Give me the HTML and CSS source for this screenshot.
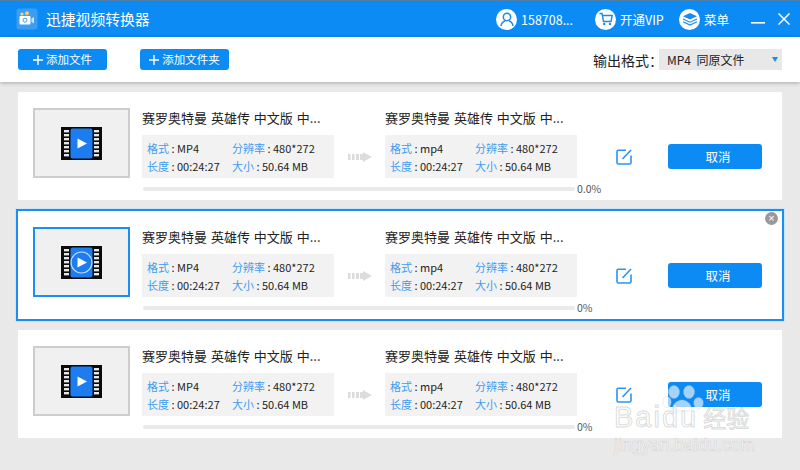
FILE: index.html
```html
<!DOCTYPE html>
<html lang="zh-CN">
<head>
<meta charset="utf-8">
<title>迅捷视频转换器</title>
<link rel="stylesheet" href="styles.css">
</head>
<body>
<svg class="defs" width="0" height="0">
  <defs>
    <symbol id="film" viewBox="0 0 41 33">
      <rect width="41" height="33" fill="#0b0b0b"/>
      <g fill="#e8e8e8">
        <rect x="3" y="3" width="5" height="2.4"/><rect x="3" y="7" width="5" height="2.4"/><rect x="3" y="11" width="5" height="2.4"/><rect x="3" y="15" width="5" height="2.4"/><rect x="3" y="19" width="5" height="2.4"/><rect x="3" y="23" width="5" height="2.4"/><rect x="3" y="27" width="5" height="2.4"/>
        <rect x="33" y="3" width="5" height="2.4"/><rect x="33" y="7" width="5" height="2.4"/><rect x="33" y="11" width="5" height="2.4"/><rect x="33" y="15" width="5" height="2.4"/><rect x="33" y="19" width="5" height="2.4"/><rect x="33" y="23" width="5" height="2.4"/><rect x="33" y="27" width="5" height="2.4"/>
      </g>
      <rect x="9.5" y="1.5" width="22" height="30" rx="2" fill="#1d7df0"/>
      <path d="M16.5 11.5 L26 16.5 L16.5 21.5 Z" fill="#fff"/>
    </symbol>
    <symbol id="film-ring" viewBox="0 0 41 33">
      <use href="#film"/>
      <circle cx="20.5" cy="16.5" r="10.5" fill="none" stroke="#bcdcff" stroke-width="1.2"/>
    </symbol>
    <symbol id="arrow" viewBox="0 0 24 10">
      <g fill="#dcdcdc">
        <rect x="0" y="2" width="2.5" height="6"/><rect x="4" y="2" width="2.5" height="6"/><rect x="8" y="2" width="3" height="6"/><rect x="12" y="2" width="3" height="6"/>
        <path d="M15 0 L24 5 L15 10 Z"/>
      </g>
    </symbol>
    <symbol id="edit" viewBox="0 0 16 16">
      <path d="M10 1.2 H2.5 A1.5 1.5 0 0 0 1 2.7 V13.5 A1.5 1.5 0 0 0 2.5 15 H13.5 A1.5 1.5 0 0 0 15 13.5 V6.5" fill="none" stroke="#2a93f3" stroke-width="1.6"/>
      <path d="M6.5 10 L15 1" fill="none" stroke="#2a93f3" stroke-width="1.6"/>
    </symbol>
    <symbol id="plus" viewBox="0 0 10 10">
      <path d="M5 0 V10 M0 5 H10" stroke="#fff" stroke-width="1.4" fill="none"/>
    </symbol>
  </defs>
</svg>

<header class="titlebar">
  <div class="logo">
    <svg width="22" height="22" viewBox="0 0 22 22">
      <rect x="0.5" y="0.5" width="21" height="21" rx="3" fill="#3c9df3"/>
      <rect x="3.5" y="8" width="11" height="8.5" rx="1" fill="#fff"/>
      <path d="M15.5 10.5 L18 9 V15.5 L15.5 14 Z" fill="#cfe6fb"/>
      <circle cx="6" cy="6" r="1.6" fill="#f7d488"/>
      <circle cx="11" cy="5.2" r="2" fill="#f5c76e"/>
      <circle cx="9" cy="12.2" r="2" fill="none" stroke="#3c9df3" stroke-width="1"/>
    </svg>
  </div>
  <div class="app-name">迅捷视频转换器</div>
  <nav class="top-nav">
    <div class="top-item user">
      <span class="round">
        <svg width="14" height="15" viewBox="0 0 14 15"><circle cx="7" cy="5" r="3.7" fill="none" stroke="#1a8cf0" stroke-width="1.5"/><path d="M1 14 C1.5 10.5 4 9.3 5 9 M13 14 C12.5 10.5 10 9.3 9 9" fill="none" stroke="#1a8cf0" stroke-width="1.5"/></svg>
      </span>
      <span>158708...</span>
    </div>
    <div class="top-item vip">
      <span class="round">
        <svg width="14" height="14" viewBox="0 0 14 14"><path d="M0.5 1.5 H3 L4.5 9.5 H12 L13.2 3.5 H3.5" fill="none" stroke="#1a8cf0" stroke-width="1.4"/><circle cx="5.2" cy="12" r="1.2" fill="#1a8cf0"/><circle cx="11" cy="12" r="1.2" fill="#1a8cf0"/></svg>
      </span>
      <span>开通VIP</span>
    </div>
    <div class="top-item menu">
      <span class="round">
        <svg width="16" height="14" viewBox="0 0 16 14"><path d="M8 1 L15 4.2 L8 7.4 L1 4.2 Z" fill="#1a8cf0"/><path d="M1 7 L8 10.2 L15 7 M1 9.8 L8 13 L15 9.8" fill="none" stroke="#1a8cf0" stroke-width="1.2"/></svg>
      </span>
      <span>菜单</span>
    </div>
    <div class="win-controls">
      <svg width="14" height="14" viewBox="0 0 14 14"><rect y="10" width="14" height="1.6" fill="#fff"/></svg>
      <svg width="12" height="12" viewBox="0 0 12 12"><path d="M0.5 0.5 L11.5 11.5 M11.5 0.5 L0.5 11.5" stroke="#fff" stroke-width="1.5"/></svg>
    </div>
  </nav>
</header>

<section class="toolbar">
  <button class="add-btn"><svg class="plus" width="10" height="10"><use href="#plus"/></svg>添加文件</button>
  <button class="add-btn second"><svg class="plus" width="10" height="10"><use href="#plus"/></svg>添加文件夹</button>
  <div class="format">
    <span class="format-label">输出格式：</span>
    <div class="format-select"><span>MP4&nbsp;&nbsp;同原文件</span><i class="caret"></i></div>
  </div>
</section>

<main class="list">
  <article class="card">
    <div class="thumb"><svg width="41" height="33"><use href="#film"/></svg></div>
    <div class="main">
      <div class="files">
        <div class="file">
          <div class="file-title">赛罗奥特曼 英雄传 中文版 中...</div>
          <div class="info">
            <div><b>格式</b> : MP4</div><div><b>分辨率</b> : 480*272</div>
            <div><b>长度</b> : 00:24:27</div><div><b>大小</b> : 50.64 MB</div>
          </div>
        </div>
        <div class="arrow"><svg width="24" height="10"><use href="#arrow"/></svg></div>
        <div class="file">
          <div class="file-title">赛罗奥特曼 英雄传 中文版 中...</div>
          <div class="info">
            <div><b>格式</b> : mp4</div><div><b>分辨率</b> : 480*272</div>
            <div><b>长度</b> : 00:24:27</div><div><b>大小</b> : 50.64 MB</div>
          </div>
        </div>
        <div class="edit"><svg width="16" height="16"><use href="#edit"/></svg></div>
        <div class="action"><button class="cancel">取消</button></div>
      </div>
      <div class="progress"><div class="bar"></div><span>0.0%</span></div>
    </div>
  </article>

  <article class="card selected">
    <span class="close">×</span>
    <div class="thumb"><svg width="41" height="33"><use href="#film-ring"/></svg></div>
    <div class="main">
      <div class="files">
        <div class="file">
          <div class="file-title">赛罗奥特曼 英雄传 中文版 中...</div>
          <div class="info">
            <div><b>格式</b> : MP4</div><div><b>分辨率</b> : 480*272</div>
            <div><b>长度</b> : 00:24:27</div><div><b>大小</b> : 50.64 MB</div>
          </div>
        </div>
        <div class="arrow"><svg width="24" height="10"><use href="#arrow"/></svg></div>
        <div class="file">
          <div class="file-title">赛罗奥特曼 英雄传 中文版 中...</div>
          <div class="info">
            <div><b>格式</b> : mp4</div><div><b>分辨率</b> : 480*272</div>
            <div><b>长度</b> : 00:24:27</div><div><b>大小</b> : 50.64 MB</div>
          </div>
        </div>
        <div class="edit"><svg width="16" height="16"><use href="#edit"/></svg></div>
        <div class="action"><button class="cancel">取消</button></div>
      </div>
      <div class="progress"><div class="bar"></div><span>0%</span></div>
    </div>
  </article>

  <article class="card">
    <div class="thumb"><svg width="41" height="33"><use href="#film"/></svg></div>
    <div class="main">
      <div class="files">
        <div class="file">
          <div class="file-title">赛罗奥特曼 英雄传 中文版 中...</div>
          <div class="info">
            <div><b>格式</b> : MP4</div><div><b>分辨率</b> : 480*272</div>
            <div><b>长度</b> : 00:24:27</div><div><b>大小</b> : 50.64 MB</div>
          </div>
        </div>
        <div class="arrow"><svg width="24" height="10"><use href="#arrow"/></svg></div>
        <div class="file">
          <div class="file-title">赛罗奥特曼 英雄传 中文版 中...</div>
          <div class="info">
            <div><b>格式</b> : mp4</div><div><b>分辨率</b> : 480*272</div>
            <div><b>长度</b> : 00:24:27</div><div><b>大小</b> : 50.64 MB</div>
          </div>
        </div>
        <div class="edit"><svg width="16" height="16"><use href="#edit"/></svg></div>
        <div class="action"><button class="cancel">取消</button></div>
      </div>
      <div class="progress"><div class="bar"></div><span>0%</span></div>
    </div>
  </article>
</main>

<div class="watermark">
  <svg class="paw" width="42" height="27" viewBox="0 0 42 27">
    <g fill="#fff" fill-opacity="0.62" stroke="#c4c4c4" stroke-opacity="0.4" stroke-width="0.8">
      <ellipse cx="12" cy="7" rx="5.5" ry="6.5"/><ellipse cx="27" cy="7" rx="5.5" ry="6.5"/>
      <ellipse cx="36.5" cy="18" rx="4.8" ry="5.5"/><ellipse cx="5" cy="17" rx="4.2" ry="5.5"/>
      <path d="M11 26 C9 20 15 15 20 15 C25 15 31 20 29 26 Z"/>
    </g>
  </svg>
  <div class="wm-brand">Baidu<span class="wm-cn">经验</span></div>
  <div class="wm-url">jingyan.baidu.com</div>
</div>
</body>
</html>
```
FILE: styles.css
```css
* { box-sizing: border-box; }
html, body { margin: 0; padding: 0; }
body {
  width: 800px;
  height: 470px;
  overflow: hidden;
  position: relative;
  background: #e9e9e9;
  font-family: "Noto Sans CJK SC", "Noto Sans", sans-serif;
  color: #222;
}
.defs { position: absolute; }

.titlebar {
  height: 37px;
  background: #0d8bf4;
  border-top: 1px solid #4f7ea6;
  display: flex;
  align-items: center;
  padding-left: 16px;
  color: #fff;
}
.logo { width: 22px; height: 22px; margin-right: 8px; }
.logo svg { display: block; }
.app-name { font-size: 14.8px; line-height: 22px; white-space: nowrap; }
.top-nav { margin-left: auto; display: flex; align-items: center; height: 100%; font-size: 12.5px; }
.top-item { display: flex; align-items: center; gap: 4px; }
.top-item.user { width: 99px; }
.top-item.vip { width: 84px; }
.top-item.menu { width: 72px; }
.round {
  width: 21px;
  height: 21px;
  border-radius: 50%;
  background: #fff;
  display: flex;
  align-items: center;
  justify-content: center;
}
.win-controls { display: flex; align-items: center; gap: 13px; padding-right: 10px; }
.win-controls svg { display: block; }

.toolbar {
  height: 45px;
  background: #fff;
  box-shadow: 0 1px 4px rgba(0, 0, 0, 0.28);
  display: flex;
  align-items: center;
  padding: 0 18px;
  position: relative;
}
.add-btn {
  width: 89px;
  height: 21px;
  border: 0;
  border-radius: 3px;
  background: #0d8bf4;
  color: #fff;
  font: 11.5px/21px "Noto Sans CJK SC", sans-serif;
  padding: 0;
  display: flex;
  align-items: center;
  justify-content: center;
  gap: 3px;
}
.add-btn.second { margin-left: 33px; }
.plus { display: block; flex: none; }
.format { margin-left: auto; display: flex; align-items: center; }
.format-label { font-size: 14px; width: 66px; white-space: nowrap; }
.format-select {
  width: 123px;
  height: 21px;
  background: #e8e8e8;
  font-size: 12px;
  line-height: 21px;
  padding: 0 4px 0 8px;
  display: flex;
  align-items: center;
  justify-content: space-between;
}
.caret {
  width: 0;
  height: 0;
  border-left: 3.5px solid transparent;
  border-right: 3.5px solid transparent;
  border-top: 5px solid #1a8cf0;
}

.list { padding: 10px 18px 0; display: flex; flex-direction: column; gap: 11px; }
.card {
  height: 108px;
  background: #fff;
  padding: 16px 19px 0 15px;
  display: flex;
  position: relative;
}
.card.selected { box-shadow: 0 0 0 2px #1b8ff0, 0 0 0 3px #cfe4f7; }
.thumb {
  width: 97px;
  height: 70px;
  background: #f0f0f0;
  border: 2px solid #cdcdcd;
  display: flex;
  align-items: center;
  justify-content: center;
  margin-right: 12px;
  flex: none;
}
.thumb svg { display: block; }
.selected .thumb { border-color: #1b8ff0; }
.main { flex: 1; min-width: 0; }
.files { display: flex; }
.file { width: 192px; flex: none; }
.file-title {
  font-size: 13px;
  word-spacing: 1px;
  line-height: 19px;
  margin-bottom: 8px;
  color: #222;
  white-space: nowrap;
}
.info {
  height: 43px;
  background: #f2f2f2;
  padding: 4px 0 0 5px;
  display: grid;
  grid-template-columns: 85px 1fr;
  grid-auto-rows: 18px;
  font-size: 11px;
  line-height: 18px;
  color: #222;
  white-space: nowrap;
}
.info b { font-weight: 400; color: #3f9cf0; }
.arrow {
  width: 51px;
  flex: none;
  margin-top: 27px;
  height: 43px;
  display: flex;
  align-items: center;
  justify-content: center;
}
.arrow svg, .edit svg { display: block; }
.edit {
  margin: 41px 36px 0 39px;
  width: 16px;
  height: 16px;
  flex: none;
}
.action { padding-top: 36px; }
.cancel {
  width: 94px;
  height: 25px;
  border: 0;
  border-radius: 3px;
  background: #0d8bf4;
  color: #fff;
  font: 12.5px/25px "Liberation Sans", "Noto Sans CJK SC", sans-serif;
  padding: 2px 0 0 6px;
  display: block;
}
.progress {
  display: flex;
  align-items: center;
  height: 12px;
  margin-top: 5px;
  font-size: 10.5px;
  line-height: 12px;
  color: #555;
}
.bar {
  margin-left: 1px;
  width: 432px;
  height: 4px;
  background: #eaeaea;
  border-radius: 2px;
  margin-right: 2px;
}
.close {
  position: absolute;
  top: 1px;
  right: 4px;
  width: 13px;
  height: 13px;
  border-radius: 50%;
  background: #999;
  color: #fff;
  font: 11px/13px "Liberation Sans", sans-serif;
  text-align: center;
}

.watermark {
  position: absolute;
  left: 614px;
  top: 385px;
  width: 145px;
  pointer-events: none;
  text-align: left;
}
.paw { display: block; margin-left: 48px; height: 27px; }
.wm-brand {
  font: 400 29px/26px "Liberation Sans", sans-serif;
  letter-spacing: 2px;
  color: rgba(255, 255, 255, 0.75);
  -webkit-text-stroke: 1px rgba(190, 190, 190, 0.55);
  margin-top: -8px;
  white-space: nowrap;
}
.wm-cn {
  font-family: "Liberation Sans", "Noto Sans CJK SC", sans-serif;
  font-size: 23px;
  letter-spacing: 0;
  margin-left: 5px;
}
.wm-url {
  font: 400 17.5px/20px "Liberation Sans", sans-serif;
  color: rgba(255, 255, 255, 0.75);
  -webkit-text-stroke: 0.6px rgba(190, 190, 190, 0.6);
  margin-top: 3px;
  white-space: nowrap;
}
```
